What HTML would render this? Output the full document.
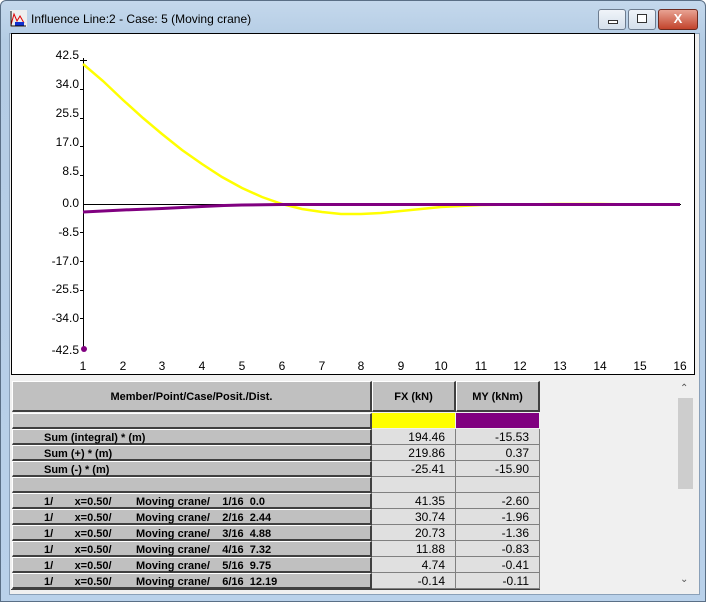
<!DOCTYPE html>
<html><head><style>
body{margin:0;width:706px;height:602px;overflow:hidden;font-family:"Liberation Sans",sans-serif;background:#fff}
.win{position:absolute;left:0;top:0;width:704px;height:600px;border:1px solid #5a6f86;border-radius:6px 6px 0 0;background:linear-gradient(#c4d8ec,#b4cce4 40px,#b9d1ea);}
.title{position:absolute;left:30px;top:11px;font-size:12px;color:#000}
.btn{position:absolute;top:8px;height:19px;border:1px solid #6d7c8f;border-radius:3px;background:linear-gradient(#f0f4f9,#d4dfeb)}
.client{position:absolute;left:8px;top:32px;width:689px;height:560px;background:#f0f0f0;border:1px solid #8aa0b8}
.chart{position:absolute;left:11px;top:33px;width:682px;height:340px;background:#fff;border:1px solid #000}
.c{position:absolute;box-sizing:border-box;font-size:11px;font-weight:bold;height:16px;line-height:17px;white-space:pre}
.h{background:#c0c0c0;border-top:1px solid #fff;border-left:1px solid #fff;border-right:2px solid #404040;border-bottom:2px solid #404040}
.v{background:#e0e0e0;border-right:1px solid #808080;border-bottom:1px solid #808080;text-align:right;padding-right:10px;font-weight:normal;font-size:12px;line-height:16px}
</style></head><body>
<div class="win">
<svg style="position:absolute;left:9px;top:9px" width="17" height="17"><rect x="0" y="0" width="17" height="17" fill="#eee"/><path d="M1 15 L4 4 L7 11 L10 6 L14 13" stroke="#d00" fill="none"/><rect x="5" y="12" width="9" height="4" fill="#1030d0"/><path d="M1 1V16H16" stroke="#000" fill="none"/></svg>
<div class="title">Influence Line:2 - Case: 5 (Moving crane)</div>
<div class="btn" style="left:597px;width:26px"><div style="position:absolute;left:9px;top:10px;width:8px;height:2px;border:1px solid #333;background:#fff"></div></div>
<div class="btn" style="left:627px;width:26px"><div style="position:absolute;left:8px;top:4px;width:8px;height:7px;border:1px solid #333;background:#fff"></div></div>
<div class="btn" style="left:657px;width:38px;background:linear-gradient(#e8a393,#c2442c);border-color:#6b2a20;color:#fff;font-weight:bold;text-align:center;font-size:13px;line-height:18px">X</div>
<div class="client"></div>
</div>
<div class="chart"></div>
<svg style="position:absolute;left:0;top:0" width="706" height="380" font-family="Liberation Sans" font-size="12">
<g text-anchor="end" fill="#000">
<text x="79" y="59">42.5</text><text x="79" y="88">34.0</text><text x="79" y="117">25.5</text><text x="79" y="146">17.0</text><text x="79" y="175">8.5</text><text x="79" y="207">0.0</text><text x="79" y="236">-8.5</text><text x="79" y="265">-17.0</text><text x="79" y="293">-25.5</text><text x="79" y="322">-34.0</text><text x="79" y="354">-42.5</text>
</g>
<g text-anchor="middle"><text x="83" y="370">1</text><text x="123" y="370">2</text><text x="162" y="370">3</text><text x="202" y="370">4</text><text x="242" y="370">5</text><text x="282" y="370">6</text><text x="322" y="370">7</text><text x="361" y="370">8</text><text x="401" y="370">9</text><text x="441" y="370">10</text><text x="481" y="370">11</text><text x="520" y="370">12</text><text x="560" y="370">13</text><text x="600" y="370">14</text><text x="640" y="370">15</text><text x="680" y="370">16</text></g>
<line x1="83.5" y1="58" x2="83.5" y2="350" stroke="#000"/>
<path d="M80 60.5H87M80 89.5H84M80 118.5H84M80 146.5H84M80 175.5H84M80 232.5H84M80 261.5H84M80 290.5H84M80 318.5H84" stroke="#000"/>
<line x1="83" y1="204.5" x2="681" y2="204.5" stroke="#000"/>
<polyline fill="none" stroke="#ffff00" stroke-width="2.5" points="83,64 103,81 123,100 143,118 162,134 182,150 202,164 222,177 242,188 262,197 282,204 302,209 322,212 341,214 361,214 381,213 401,211 421,209 441,207 461,206 481,205 520,204.5 560,204 600,204 640,204.5 680,204.5"/>
<polyline fill="none" stroke="#800080" stroke-width="3" points="83,212 123,210 162,208.5 202,206.5 224,205.5 242,205 282,204.5 680,204.5"/>
<circle cx="84" cy="349" r="3" fill="#800080"/>
</svg>
<div class="c h" style="left:12px;top:381px;width:360px;height:31px;line-height:31px;text-align:center">Member/Point/Case/Posit./Dist.</div>
<div class="c h" style="left:372px;top:381px;width:84px;height:31px;line-height:31px;text-align:center">FX (kN)</div>
<div class="c h" style="left:456px;top:381px;width:84px;height:31px;line-height:31px;text-align:center">MY (kNm)</div>
<div class="c h" style="left:12px;top:413px;width:360px"></div>
<div class="c" style="left:372px;top:413px;width:83px;height:15px;background:#ff0"></div>
<div class="c" style="left:456px;top:413px;width:83px;height:15px;background:#800080"></div>

<div class="c h" style="left:12px;top:429px;width:360px;padding-left:31px">Sum (integral) * (m)</div><div class="c v" style="left:372px;top:429px;width:84px">194.46</div><div class="c v" style="left:456px;top:429px;width:84px">-15.53</div>
<div class="c h" style="left:12px;top:445px;width:360px;padding-left:31px">Sum (+) * (m)</div><div class="c v" style="left:372px;top:445px;width:84px">219.86</div><div class="c v" style="left:456px;top:445px;width:84px">0.37</div>
<div class="c h" style="left:12px;top:461px;width:360px;padding-left:31px">Sum (-) * (m)</div><div class="c v" style="left:372px;top:461px;width:84px">-25.41</div><div class="c v" style="left:456px;top:461px;width:84px">-15.90</div>
<div class="c h" style="left:12px;top:477px;width:360px"></div><div class="c v" style="left:372px;top:477px;width:84px"></div><div class="c v" style="left:456px;top:477px;width:84px"></div>

<div class="c h" style="left:12px;top:493px;width:360px;padding-left:31px">1/       x=0.50/        Moving crane/    1/16  0.0</div><div class="c v" style="left:372px;top:493px;width:84px">41.35</div><div class="c v" style="left:456px;top:493px;width:84px">-2.60</div>
<div class="c h" style="left:12px;top:509px;width:360px;padding-left:31px">1/       x=0.50/        Moving crane/    2/16  2.44</div><div class="c v" style="left:372px;top:509px;width:84px">30.74</div><div class="c v" style="left:456px;top:509px;width:84px">-1.96</div>
<div class="c h" style="left:12px;top:525px;width:360px;padding-left:31px">1/       x=0.50/        Moving crane/    3/16  4.88</div><div class="c v" style="left:372px;top:525px;width:84px">20.73</div><div class="c v" style="left:456px;top:525px;width:84px">-1.36</div>
<div class="c h" style="left:12px;top:541px;width:360px;padding-left:31px">1/       x=0.50/        Moving crane/    4/16  7.32</div><div class="c v" style="left:372px;top:541px;width:84px">11.88</div><div class="c v" style="left:456px;top:541px;width:84px">-0.83</div>
<div class="c h" style="left:12px;top:557px;width:360px;padding-left:31px">1/       x=0.50/        Moving crane/    5/16  9.75</div><div class="c v" style="left:372px;top:557px;width:84px">4.74</div><div class="c v" style="left:456px;top:557px;width:84px">-0.41</div>
<div class="c h" style="left:12px;top:573px;width:360px;padding-left:31px">1/       x=0.50/        Moving crane/    6/16  12.19</div><div class="c v" style="left:372px;top:573px;width:84px">-0.14</div><div class="c v" style="left:456px;top:573px;width:84px">-0.11</div>
<div style="position:absolute;left:11px;top:589px;width:529px;height:1px;background:#404040"></div>
<div style="position:absolute;left:677px;top:381px;width:17px;height:210px;background:#f0f0f0"></div>
<div style="position:absolute;left:678px;top:398px;width:15px;height:91px;background:#cdcdcd"></div>
<div style="position:absolute;left:680px;top:383px;font-size:10px;color:#555">&#8963;</div>
<div style="position:absolute;left:680px;top:574px;font-size:10px;color:#555">&#8964;</div>
</body></html>
